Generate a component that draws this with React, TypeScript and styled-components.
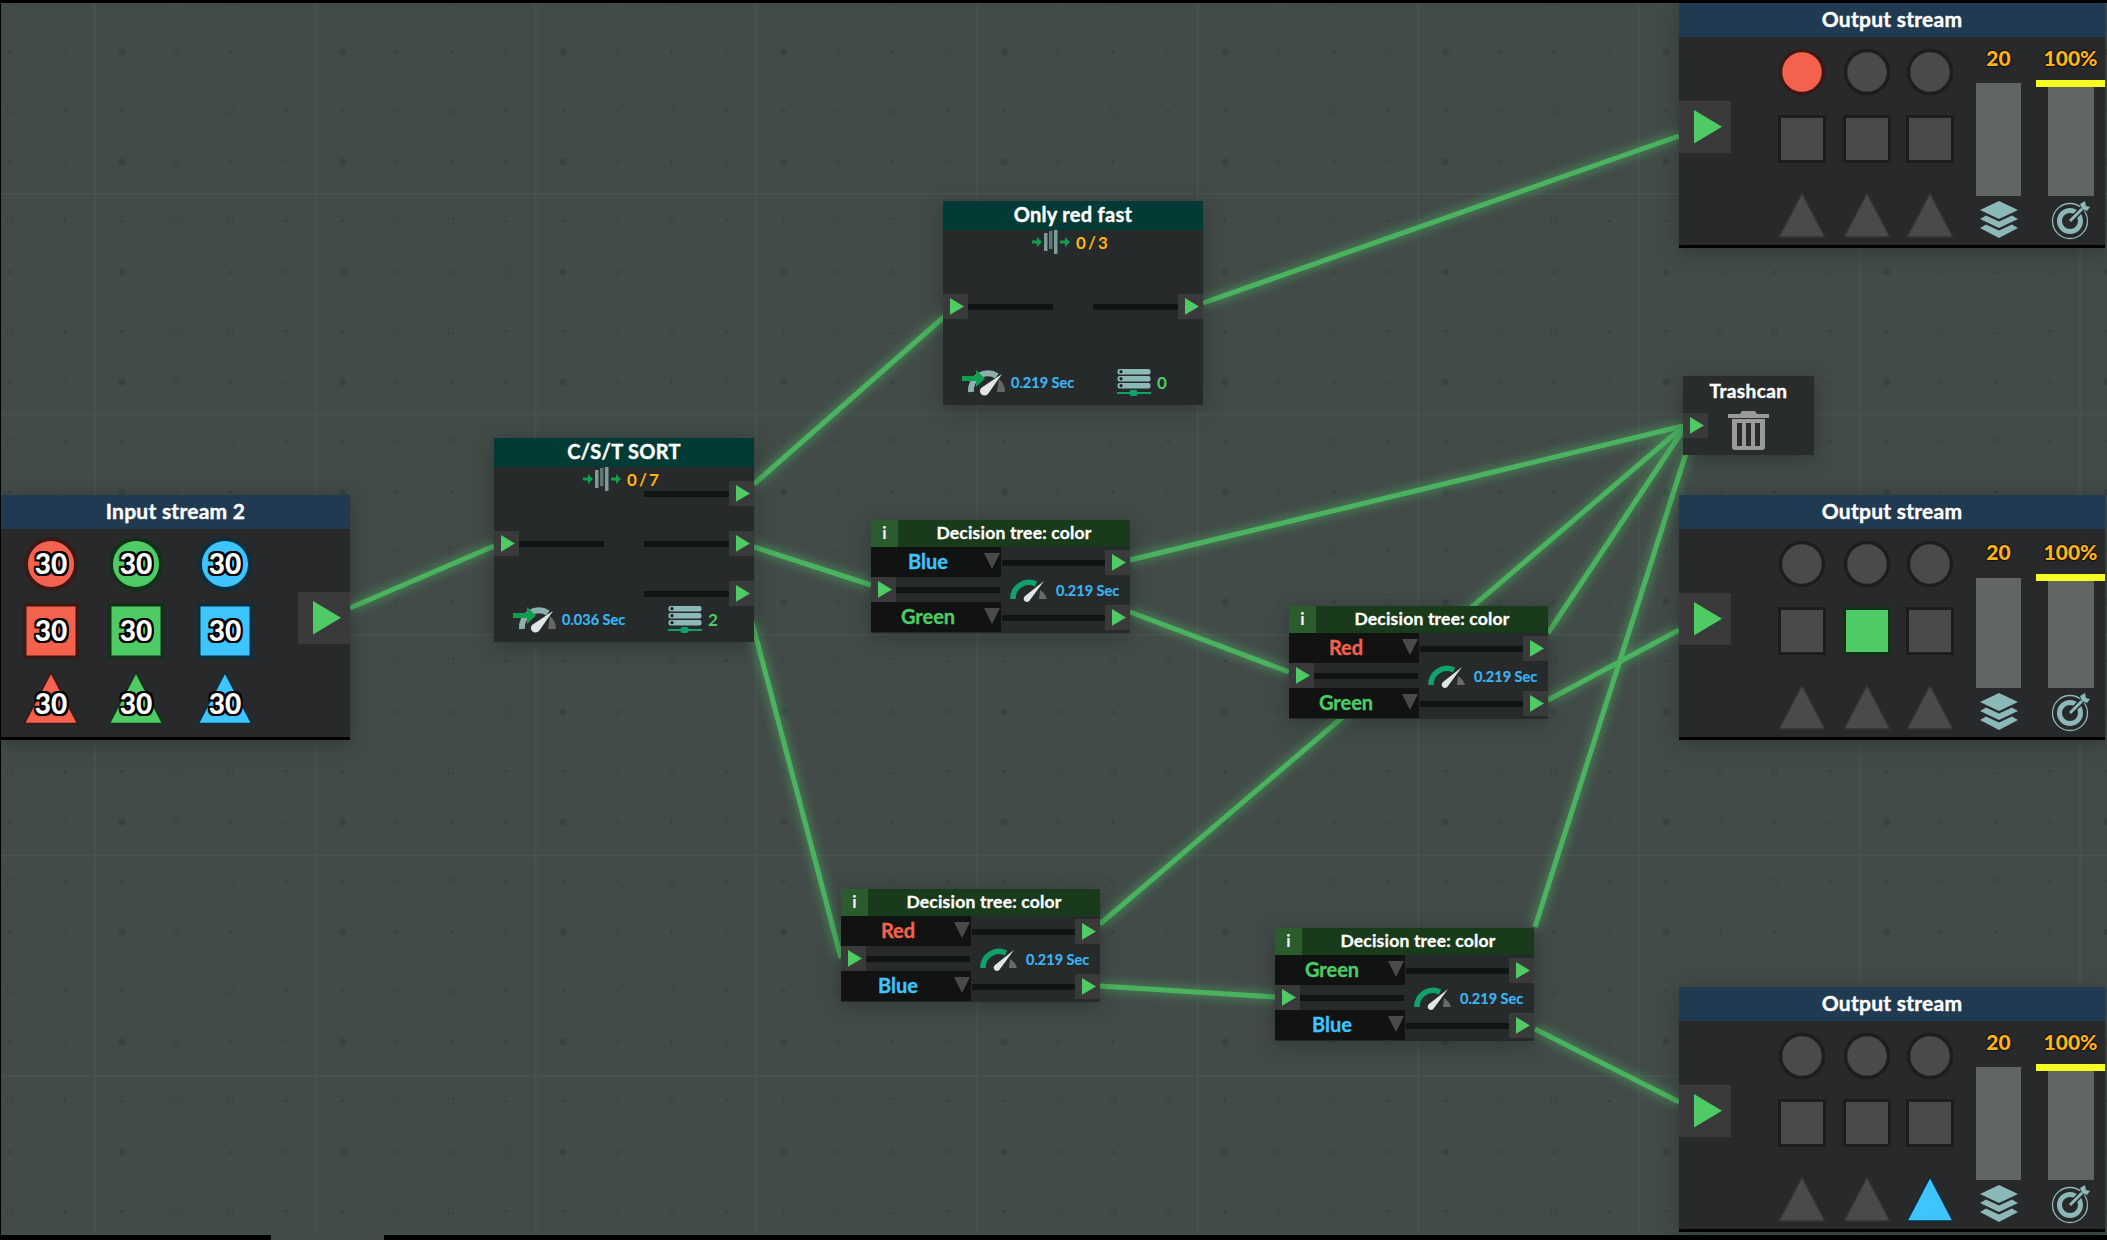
import React from 'react';
import styled, { createGlobalStyle } from 'styled-components';

const GREEN = '#4ecb65';
const RED = '#f4624d';
const BLUE = '#3ec5ff';
const ORANGE = '#ffb414';
const TEAL = '#8cb8b8';
const EMPTY = '#4a4a4a';

type Kind = 'circle' | 'square' | 'triangle';
type Point = [number, number, number, number];

const GlobalStyle = createGlobalStyle`
  html, body {
    margin: 0;
    padding: 0;
    background: #424b48;
    overflow: hidden;
  }
  * {
    box-sizing: border-box;
  }
`;

const Canvas = styled.div`
  position: relative;
  width: 2107px;
  height: 1240px;
  overflow: hidden;
  background: #424b48;
  font-family: Lato, 'Open Sans', sans-serif;
  font-weight: 700;
  color: #fff;

  &::before {
    content: '';
    position: absolute;
    z-index: 1;
    inset: 0 0 auto 0;
    height: 3px;
    background: #000;
  }

  &::after {
    content: '';
    position: absolute;
    z-index: 1;
    inset: 0 auto 0 0;
    width: 1px;
    background: #000;
  }
`;

const WireLayer = styled.svg`
  position: absolute;
  inset: 0;
`;

const ScrollTrack = styled.div`
  position: absolute;
  left: 0;
  right: 0;
  bottom: 0;
  height: 5px;
  background: #000;
  padding-left: 271px;
`;

const ScrollThumb = styled.div`
  width: 113px;
  height: 100%;
  background: #424b48;
`;

const Node = styled.div<{ $x: number; $y: number; $w: number }>`
  position: absolute;
  left: ${(p) => p.$x}px;
  top: ${(p) => p.$y}px;
  width: ${(p) => p.$w}px;
  box-shadow: 0 4px 18px rgba(20, 26, 25, 0.35);
`;

const StreamNode = styled(Node)`
  background: #27292a;
  border-bottom: 3px solid #000;
`;

const StreamHeader = styled.div`
  height: 34px;
  padding-bottom: 3px;
  background: #203a52;
  display: flex;
  align-items: center;
  justify-content: center;
  font-size: 21px;
  letter-spacing: 0.25px;
  -webkit-text-stroke: 0.4px #fff;
`;

const StreamBody = styled.div`
  display: flex;
  height: 208px;
`;

const BigPort = styled.div<{ $top: number; $left?: number }>`
  width: 52px;
  height: 52px;
  margin-top: ${(p) => p.$top}px;
  margin-left: ${(p) => p.$left ?? 0}px;
  padding-left: 15px;
  background: #3a3a3a;
  display: flex;
  align-items: center;
  flex-shrink: 0;
`;

const InputGrid = styled.div`
  display: grid;
  grid-template-columns: 85px 89px 56px;
  grid-template-rows: 67px 67px 56px;
  margin: 7px 0 0 22px;
`;

const OutputGrid = styled.div`
  display: grid;
  grid-template-columns: 65px 63px 48px;
  grid-template-rows: 67px 76px 48px;
  margin: 11px 0 0 47px;
`;

const ShapeCell = styled.div<{ $size: number }>`
  position: relative;
  width: ${(p) => p.$size}px;
  height: ${(p) => p.$size}px;
`;

const Count = styled.span<{ $kind: Kind }>`
  position: absolute;
  left: 0;
  right: 0;
  top: ${(p) => (p.$kind === 'triangle' ? 16 : 10)}px;
  text-align: center;
  font-size: 28px;
  line-height: 34px;
  font-weight: 900;
  color: #fff;
  text-shadow:
    -2px 0 0 #000, 2px 0 0 #000, 0 -2px 0 #000, 0 2px 0 #000,
    -2px -2px 0 #000, 2px -2px 0 #000, -2px 2px 0 #000, 2px 2px 0 #000;
`;

const StatColumn = styled.div<{ $w: number; $left: number; $low?: boolean }>`
  width: ${(p) => p.$w}px;
  margin-left: ${(p) => p.$left}px;
  padding-top: ${(p) => (p.$low ? 11 : 9)}px;
  display: flex;
  flex-direction: column;
  align-items: center;
`;

const StatLabel = styled.div`
  height: 24px;
  font-size: 21px;
  line-height: 24px;
  font-weight: 900;
  color: ${ORANGE};
  text-shadow: -1px 0 1px #111, 1px 0 1px #111, 0 -1px 1px #111, 0 1px 1px #111;
`;

const StatBar = styled.div<{ $low?: boolean }>`
  width: 45px;
  height: ${(p) => (p.$low ? 110 : 113)}px;
  margin-top: ${(p) => (p.$low ? 14 : 13)}px;
  background: #616566;
`;

const GoalCap = styled.div`
  width: 100%;
  height: 7px;
  margin-top: 10px;
  background: #f5ff21;
`;

const GoalBar = styled.div<{ $low?: boolean }>`
  width: 46px;
  height: ${(p) => (p.$low ? 107 : 109)}px;
  background: #616566;
`;

const StatIcon = styled.div`
  margin-top: 4px;
  height: 40px;
  display: flex;
  align-items: center;
`;

const SorterNode = styled(Node)`
  height: 204px;
  background: #262a2a;
`;

const SorterHeader = styled.div`
  height: 29px;
  padding-bottom: 3px;
  background: #023a36;
  display: flex;
  align-items: center;
  justify-content: center;
  font-size: 20px;
  letter-spacing: 0.3px;
  -webkit-text-stroke: 0.4px #fff;
`;

const Counter = styled.div`
  height: 24px;
  margin-bottom: -10px;
  padding-right: 6px;
  display: flex;
  align-items: center;
  justify-content: center;
  gap: 6px;
  color: ${ORANGE};
  font-size: 17px;
  word-spacing: -2px;
`;

const PortRows = styled.div`
  display: grid;
  grid-template-rows: repeat(3, 25px);
  row-gap: 25px;
`;

const PortRow = styled.div`
  display: flex;
  justify-content: space-between;
`;

const Lane = styled.div`
  display: flex;
  align-items: center;
  width: 110px;
`;

const EmptyLane = styled.div`
  width: 110px;
`;

const LaneBar = styled.div`
  flex: 1;
  height: 6px;
  background: #101414;
`;

const SmallPort = styled.div`
  width: 25px;
  height: 25px;
  padding-left: 7px;
  background: #3a3a3a;
  display: flex;
  align-items: center;
  flex-shrink: 0;
`;

const SorterFooter = styled.div`
  display: grid;
  grid-template-columns: 155px 1fr;
  align-items: center;
  height: 44px;
  margin-top: -9px;
  padding-left: 19px;
`;

const FooterGroup = styled.div<{ $gap: number }>`
  display: flex;
  align-items: center;
  gap: ${(p) => p.$gap}px;
`;

const Seconds = styled.span`
  color: #3cb4f0;
  font-size: 14.5px;
  white-space: nowrap;
  -webkit-text-stroke: 0.2px #3cb4f0;
`;

const Queue = styled.span`
  color: ${GREEN};
  font-size: 17px;
`;

const DecisionNode = styled(Node)`
  height: 113px;
  background: #262a2a;
`;

const DecisionHeader = styled.div`
  height: 27px;
  display: flex;
  background: #1a3a1c;
`;

const InfoTab = styled.div`
  width: 27px;
  padding-bottom: 2px;
  background: #2a5c2e;
  display: flex;
  align-items: center;
  justify-content: center;
  font-size: 17px;
`;

const DecisionTitle = styled.div`
  flex: 1;
  padding-bottom: 2px;
  display: flex;
  align-items: center;
  justify-content: center;
  font-size: 17.5px;
  letter-spacing: 0.2px;
  -webkit-text-stroke: 0.3px #fff;
`;

const DecisionBody = styled.div`
  display: grid;
  grid-template-columns: 130px 1fr;
`;

const LeftColumn = styled.div`
  display: flex;
  flex-direction: column;
`;

const Select = styled.div<{ $color: string }>`
  height: 30px;
  background: #111212;
  display: flex;
  align-items: center;
  justify-content: center;
  padding: 0 16px 2px 0;
  position: relative;
  color: ${(p) => p.$color};
  font-size: 20px;
  -webkit-text-stroke: 0.3px ${(p) => p.$color};
`;

const SelectArrow = styled.span`
  position: absolute;
  right: 1px;
  top: 6px;
  width: 0;
  height: 0;
  border-left: 8.5px solid transparent;
  border-right: 8.5px solid transparent;
  border-top: 16px solid #4a4a4a;
`;

const InputLane = styled.div`
  height: 25px;
  display: flex;
  align-items: center;
  padding-right: 1px;
`;

const RightColumn = styled.div`
  padding-top: 3px;
  display: flex;
  flex-direction: column;
`;

const OutLane = styled.div`
  height: 25px;
  display: flex;
  align-items: center;
  padding-left: 1px;
`;

const SpeedRow = styled.div`
  height: 30px;
  display: flex;
  align-items: center;
  gap: 8px;
  padding-left: 9px;
`;

const TrashNode = styled(Node)`
  height: 79px;
  background: #282c2b;
  display: grid;
  grid-template-columns: 25px 1fr;
  grid-template-rows: 27px 1fr;
`;

const TrashTitle = styled.div`
  grid-column: 1 / span 2;
  display: flex;
  align-items: flex-end;
  justify-content: center;
  font-size: 19px;
  line-height: 24px;
  letter-spacing: 0.4px;
  -webkit-text-stroke: 0.4px #fff;
`;

const TrashPortSlot = styled.div`
  padding-top: 10px;
`;

const TrashIconSlot = styled.div`
  padding: 4px 0 0 20px;
`;

const Triangle: React.FC<{ size: number }> = ({ size }) => (
  <svg width={size} height={size * 1.2} viewBox="0 0 20 24">
    <polygon points="0,0 20,12 0,24" fill={GREEN} />
  </svg>
);

const Shape: React.FC<{ kind: Kind; size: number; fill: string; edge: string }> = ({ kind, size, fill, edge }) => (
  <svg width={size} height={size} viewBox="0 0 48 48">
    {kind === 'circle' && <circle cx="24" cy="24" r="21.5" fill={fill} stroke={edge} strokeWidth="3.5" />}
    {kind === 'square' && <rect x="1.5" y="1.5" width="45" height="45" fill={fill} stroke={edge} strokeWidth="3" />}
    {kind === 'triangle' && <polygon points="24,2 47,46 1,46" fill={fill} stroke={edge} strokeWidth="1.5" strokeLinejoin="round" />}
  </svg>
);

const CounterIcon = () => (
  <svg width="38" height="24" viewBox="0 0 38 24">
    <g fill="#0f9d4f">
      <path d="M0 10.5h5V7l5 5-5 5v-3.5H0z" />
      <path d="M28 10.5h5V7l5 5-5 5v-3.5h-5z" />
    </g>
    <rect x="12" y="3" width="3.5" height="18" fill="#7f9a9a" />
    <rect x="17" y="1" width="3.5" height="18" fill="#5f7474" />
    <rect x="22" y="0" width="3.5" height="24" fill="#7f9a9a" />
  </svg>
);

const SpeedIcon = () => (
  <svg width="45" height="28" viewBox="0 0 45 28">
    <path d="M9 24a17 17 0 0 1 26-16" fill="none" stroke="#8cb0ad" strokeWidth="6" />
    <path d="M37 11a17 17 0 0 1 6 13h-8z" fill="#666" />
    <path d="M0 8h14V2l9 8.5-9 8.5v-6H0z" fill="#0f9d4f" />
    <path d="M19 20L40 6 26 26a3.6 3.6 0 1 1-7-6z" fill="#dfe6e4" />
  </svg>
);

const GaugeIcon = () => (
  <svg width="38" height="24" viewBox="0 0 38 24">
    <path d="M3 21A16 16 0 0 1 26 6" fill="none" stroke="#0fa36b" strokeWidth="5.5" />
    <path d="M30 12a16 16 0 0 1 7 9h-8z" fill="#6a6a6a" />
    <path d="M15 18L34 3 20 22a3.3 3.3 0 1 1-5-4z" fill="#dfe6e4" />
  </svg>
);

const ServerIcon = () => (
  <svg width="34" height="29" viewBox="0 0 34 29">
    {[1, 8, 15].map((y) => (
      <g key={y}>
        <rect x="0.5" y={y} width="33" height="5.5" rx="2" fill={TEAL} />
        <circle cx="4" cy={y + 2.7} r="1.6" fill="#16201f" />
      </g>
    ))}
    <rect x="0" y="24" width="34" height="2" fill="#0fa36b" />
    <rect x="12.5" y="22" width="8" height="6" rx="2" fill="#0fa36b" />
  </svg>
);

const LayersIcon = () => (
  <svg width="40" height="40" viewBox="0 0 40 40">
    <path d="M20 1l19 9-19 9L1 10z" fill={TEAL} />
    <path d="M7 15.5l13 6 13-6 6 3.5-19 9-19-9z" fill={TEAL} />
    <path d="M7 24.5l13 6 13-6 6 3.5-19 10-19-10z" fill={TEAL} />
  </svg>
);

const TargetIcon = () => (
  <svg width="40" height="40" viewBox="0 0 40 40">
    <circle cx="19" cy="21" r="17.5" fill="none" stroke={TEAL} strokeWidth="1.3" />
    <circle cx="19" cy="21" r="10.5" fill="none" stroke={TEAL} strokeWidth="5" />
    <path d="M19 21L33 7" stroke="#27292a" strokeWidth="6" />
    <path d="M19 21L31 9" stroke={TEAL} strokeWidth="3" />
    <path d="M29 4l2 5 5 2 3-4-4-1-1-5z" fill={TEAL} />
  </svg>
);

const TrashIcon = () => (
  <svg width="41" height="43" viewBox="0 0 41 43">
    <path d="M0 7h12l2-3h13l2 3h12v4H0z" fill="#9a9a9a" />
    <path d="M4 12h33v28a3 3 0 0 1-3 3H7a3 3 0 0 1-3-3z" fill="#9a9a9a" />
    <rect x="9" y="16" width="5" height="23" fill="#282c2b" />
    <rect x="18" y="16" width="5" height="23" fill="#282c2b" />
    <rect x="27" y="16" width="5" height="23" fill="#282c2b" />
  </svg>
);

const PortMark = () => (
  <SmallPort>
    <Triangle size={14} />
  </SmallPort>
);

const HUES = { red: [RED, '#3a1a16'], green: [GREEN, '#143018'], blue: [BLUE, '#0d2e3d'] } as const;
const KINDS: Kind[] = ['circle', 'square', 'triangle'];

const InputStream: React.FC<{ x: number; y: number }> = ({ x, y }) => (
  <StreamNode $x={x} $y={y} $w={349}>
    <StreamHeader>Input stream 2</StreamHeader>
    <StreamBody>
      <InputGrid>
        {KINDS.map((kind) =>
          Object.values(HUES).map(([fill, edge]) => (
            <ShapeCell key={kind + fill} $size={56}>
              <Shape kind={kind} size={56} fill={fill} edge={edge} />
              <Count $kind={kind}>30</Count>
            </ShapeCell>
          ))
        )}
      </InputGrid>
      <BigPort $top={63} $left={45}>
        <Triangle size={28} />
      </BigPort>
    </StreamBody>
  </StreamNode>
);

// lit: index of the shape that this output accepts, row by row
const OutputStream: React.FC<{ y: number; lit: number; hue: keyof typeof HUES; low?: boolean }> = ({ y, lit, hue, low }) => (
  <StreamNode $x={1679} $y={y} $w={426}>
    <StreamHeader>Output stream</StreamHeader>
    <StreamBody>
      <BigPort $top={64}>
        <Triangle size={28} />
      </BigPort>
      <OutputGrid>
        {KINDS.flatMap((kind, row) =>
          [0, 1, 2].map((col) => {
            const on = row * 3 + col === lit;
            return (
              <ShapeCell key={kind + col} $size={48}>
                <Shape
                  kind={kind}
                  size={48}
                  fill={on ? HUES[hue][0] : EMPTY}
                  edge={on ? HUES[hue][1] : kind === 'triangle' ? '#333' : '#1c1d1d'}
                />
              </ShapeCell>
            );
          })
        )}
      </OutputGrid>
      <StatColumn $w={45} $left={22} $low={low}>
        <StatLabel>20</StatLabel>
        <StatBar $low={low} />
        <StatIcon>
          <LayersIcon />
        </StatIcon>
      </StatColumn>
      <StatColumn $w={69} $left={15} $low={low}>
        <StatLabel>100%</StatLabel>
        <GoalCap />
        <GoalBar $low={low} />
        <StatIcon>
          <TargetIcon />
        </StatIcon>
      </StatColumn>
    </StreamBody>
  </StreamNode>
);

const Sorter: React.FC<{
  x: number;
  y: number;
  title: string;
  count: string;
  time: string;
  queue: number;
  rows: [boolean, boolean][];
}> = ({ x, y, title, count, time, queue, rows }) => (
  <SorterNode $x={x} $y={y} $w={260}>
    <SorterHeader>{title}</SorterHeader>
    <Counter>
      <CounterIcon />
      {count}
    </Counter>
    <PortRows>
      {rows.map(([left, right], i) => (
        <PortRow key={i}>
          {left ? (
            <Lane>
              <PortMark />
              <LaneBar />
            </Lane>
          ) : (
            <EmptyLane />
          )}
          {right ? (
            <Lane>
              <LaneBar />
              <PortMark />
            </Lane>
          ) : (
            <EmptyLane />
          )}
        </PortRow>
      ))}
    </PortRows>
    <SorterFooter>
      <FooterGroup $gap={4}>
        <SpeedIcon />
        <Seconds>{time}</Seconds>
      </FooterGroup>
      <FooterGroup $gap={6}>
        <ServerIcon />
        <Queue>{queue}</Queue>
      </FooterGroup>
    </SorterFooter>
  </SorterNode>
);

const COLORS: Record<string, string> = { Red: RED, Green: GREEN, Blue: BLUE };

const Decision: React.FC<{ x: number; y: number; top: string; bottom: string }> = ({ x, y, top, bottom }) => (
  <DecisionNode $x={x} $y={y} $w={259}>
    <DecisionHeader>
      <InfoTab>i</InfoTab>
      <DecisionTitle>Decision tree: color</DecisionTitle>
    </DecisionHeader>
    <DecisionBody>
      <LeftColumn>
        <Select $color={COLORS[top]}>
          {top}
          <SelectArrow />
        </Select>
        <InputLane>
          <PortMark />
          <LaneBar />
        </InputLane>
        <Select $color={COLORS[bottom]}>
          {bottom}
          <SelectArrow />
        </Select>
      </LeftColumn>
      <RightColumn>
        <OutLane>
          <LaneBar />
          <PortMark />
        </OutLane>
        <SpeedRow>
          <GaugeIcon />
          <Seconds>0.219 Sec</Seconds>
        </SpeedRow>
        <OutLane>
          <LaneBar />
          <PortMark />
        </OutLane>
      </RightColumn>
    </DecisionBody>
  </DecisionNode>
);

const WIRES: Point[] = [
  [350, 608, 494, 546],
  [754, 484, 945, 316],
  [754, 547, 871, 585],
  [752, 622, 841, 958],
  [1203, 303, 1679, 136],
  [1130, 560, 1683, 426],
  [1130, 612, 1289, 672],
  [1548, 633, 1683, 430],
  [1548, 700, 1679, 630],
  [1100, 924, 1683, 427],
  [1100, 986, 1275, 997],
  [1535, 927, 1695, 425],
  [1535, 1029, 1679, 1102],
];

const SYMBOL = '#33403f';

const Wires = () => (
  <WireLayer width={2107} height={1240}>
    <defs>
      <pattern id="marks" x="0" y="20" width="220.6" height="110" patternUnits="userSpaceOnUse">
        <g fill={SYMBOL} stroke="none">
          <circle cx="10" cy="32" r="1.5" />
          <circle cx="122" cy="32" r="3.5" opacity="0.75" />
          <circle cx="65" cy="91" r="1.5" />
          <circle cx="122" cy="91" r="1.5" />
        </g>
        <g fill="none" stroke={SYMBOL} strokeWidth="0.9" opacity="0.8">
          <path d="M62 29l6 6M68 29l-6 6" />
          <path d="M176 28v8M172 32h8" />
          <rect x="7.5" y="88" width="5" height="6" />
          <path d="M173 88l6 6M179 88l-6 6" />
        </g>
      </pattern>
      <pattern id="rules" x="94" y="193" width="220.6" height="220.6" patternUnits="userSpaceOnUse">
        <rect x="0" y="0" width="1.2" height="220.6" fill="#4a5451" />
        <rect x="0" y="0" width="220.6" height="1.2" fill="#4a5451" />
      </pattern>
      <filter id="glow" x="0" y="0" width="2107" height="1240" filterUnits="userSpaceOnUse">
        <feGaussianBlur stdDeviation="5" />
      </filter>
      <filter id="soft" x="0" y="0" width="2107" height="1240" filterUnits="userSpaceOnUse">
        <feGaussianBlur stdDeviation="0.7" />
      </filter>
    </defs>
    <rect width="2107" height="1240" fill="url(#marks)" />
    <rect width="2107" height="1240" fill="url(#rules)" />
    <g filter="url(#glow)" opacity="0.4" stroke="#4fc768" strokeWidth="10">
      {WIRES.map(([x1, y1, x2, y2]) => (
        <line key={`g${x1}${y1}${x2}`} x1={x1} y1={y1} x2={x2} y2={y2} />
      ))}
    </g>
    <g filter="url(#soft)" stroke="#4bb25f" strokeWidth="5">
      {WIRES.map(([x1, y1, x2, y2]) => (
        <line key={`w${x1}${y1}${x2}`} x1={x1} y1={y1} x2={x2} y2={y2} />
      ))}
    </g>
  </WireLayer>
);

export default function App() {
  return (
    <Canvas>
      <GlobalStyle />
      <Wires />
      <InputStream x={1} y={495} />
      <Sorter
        x={494}
        y={438}
        title="C/S/T SORT"
        count="0 / 7"
        time="0.036 Sec"
        queue={2}
        rows={[
          [false, true],
          [true, true],
          [false, true],
        ]}
      />
      <Sorter
        x={943}
        y={201}
        title="Only red fast"
        count="0 / 3"
        time="0.219 Sec"
        queue={0}
        rows={[
          [false, false],
          [true, true],
          [false, false],
        ]}
      />
      <Decision x={871} y={520} top="Blue" bottom="Green" />
      <Decision x={1289} y={606} top="Red" bottom="Green" />
      <Decision x={841} y={889} top="Red" bottom="Blue" />
      <Decision x={1275} y={928} top="Green" bottom="Blue" />
      <TrashNode $x={1683} $y={376} $w={131}>
        <TrashTitle>Trashcan</TrashTitle>
        <TrashPortSlot>
          <PortMark />
        </TrashPortSlot>
        <TrashIconSlot>
          <TrashIcon />
        </TrashIconSlot>
      </TrashNode>
      <OutputStream y={3} lit={0} hue="red" />
      <OutputStream y={495} lit={4} hue="green" low />
      <OutputStream y={987} lit={8} hue="blue" />
      <ScrollTrack>
        <ScrollThumb />
      </ScrollTrack>
    </Canvas>
  );
}
